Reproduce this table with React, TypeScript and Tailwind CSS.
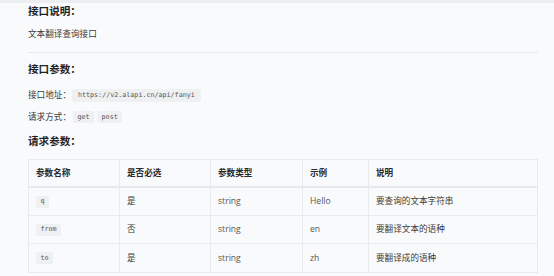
import React from "react";

const sans = "font-['Open_Sans','Noto_Sans_CJK_SC',sans-serif]";
const mono = "font-['DejaVu_Sans_Mono','Liberation_Mono',monospace]";

const rows = [
  { name: "q", required: "是", type: "string", example: "Hello", desc: "要查询的文本字符串" },
  { name: "from", required: "否", type: "string", example: "en", desc: "要翻译文本的语种" },
  { name: "to", required: "是", type: "string", example: "zh", desc: "要翻译成的语种" },
];

const cols = "grid grid-cols-[91px_91px_92px_66px_168px]";

const Code = ({ children }: { children: React.ReactNode }) => (
  <code className={`${mono} inline-flex items-center h-[12px] px-[4.5px] rounded-[2px] bg-[#eef0f2] text-[6.7px] text-[#555]`}>
    {children}
  </code>
);

export default function App() {
  return (
    <div className={`${sans} min-h-screen bg-[#f9fafb] text-[#333]`}>
      <div className="h-[3px] bg-[#eceef1]" />
      <div className="pl-[28px] pr-[16px]">
        <h2 className="text-[10.6px] font-bold leading-[16px] text-[#1f2328]">接口说明：</h2>
        <p className="mt-[7px] text-[8.6px] leading-[16px] text-[#3a3a3a]">文本翻译查询接口</p>
        <div className="mt-[10px] border-t border-[#e6e8eb]" />

        <h2 className="mt-[8px] text-[10.6px] font-bold leading-[16px] text-[#1f2328]">接口参数：</h2>
        <div className="mt-[10px] flex items-center h-[16px] text-[8.6px] text-[#3a3a3a]">
          <span>接口地址：</span>
          <code className={`${mono} ml-[1px] inline-flex items-center h-[13px] px-[6px] rounded-[2px] bg-[#eef0f2] text-[6.7px] text-[#555]`}>
            https://v2.alapi.cn/api/fanyi
          </code>
        </div>
        <div className="mt-[6px] flex items-center gap-[3px] h-[16px] text-[8.6px] text-[#3a3a3a]">
          <span className="mr-[-1px]">请求方式：</span>
          <Code>get</Code>
          <Code>post</Code>
        </div>

        <h2 className="mt-[8px] text-[10.6px] font-bold leading-[16px] text-[#1f2328]">请求参数：</h2>
        <div className="mt-[10px] border border-[#e8eaed] text-[8.6px]">
          <div className={`${cols} h-[28px] border-b-2 border-[#e6e8eb] font-bold text-[#2a2a2a]`}>
            {["参数名称", "是否必选", "参数类型", "示例", "说明"].map((h, i) => (
              <div key={h} className={`flex items-center px-[7px] ${i < 4 ? "border-r border-[#e8eaed]" : ""}`}>
                {h}
              </div>
            ))}
          </div>
          {rows.map((r, ri) => (
            <div key={r.name} className={`${cols} h-[28px] ${ri < rows.length - 1 ? "border-b border-[#e8eaed]" : ""}`}>
              <div className="flex items-center px-[7px] border-r border-[#e8eaed]">
                <Code>{r.name}</Code>
              </div>
              <div className="flex items-center px-[7px] border-r border-[#e8eaed] text-[#3a3a3a]">{r.required}</div>
              <div className="flex items-center px-[7px] border-r border-[#e8eaed] text-[#555]">{r.type}</div>
              <div className="flex items-center px-[7px] border-r border-[#e8eaed] text-[#555]">{r.example}</div>
              <div className="flex items-center px-[7px] text-[#3a3a3a]">{r.desc}</div>
            </div>
          ))}
        </div>
      </div>
    </div>
  );
}
